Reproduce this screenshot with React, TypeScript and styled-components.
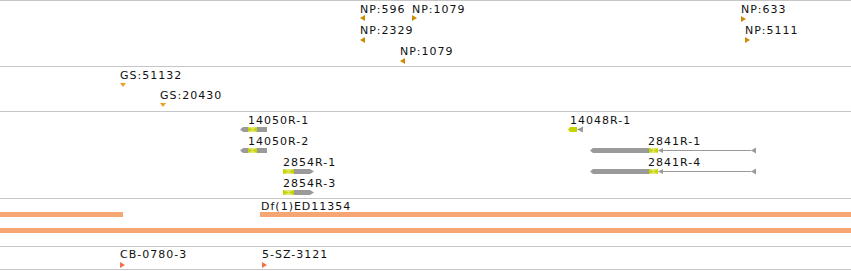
import React from "react";
import styled, { createGlobalStyle } from "styled-components";

const GlobalStyle = createGlobalStyle`
  html, body { margin: 0; padding: 0; background: #ffffff; }
  body { font-family: "DejaVu Sans", Verdana, sans-serif; }
`;

const Browser = styled.div`
  width: 851px;
  display: flex;
  flex-direction: column;
  border-bottom: 1px solid #c6c6c6;
`;

const Track = styled.section<{ $h: number }>`
  position: relative;
  height: ${(p) => p.$h}px;
  border-top: 1px solid #c6c6c6;
  overflow: hidden;
`;

const Label = styled.span.attrs<{ $x: number; $y: number }>((p) => ({
  style: { left: p.$x, top: p.$y },
}))<{ $x: number; $y: number }>`
  position: absolute;
  font-family: "DejaVu Sans", Verdana, sans-serif;
  font-size: 11px;
  line-height: 13px;
  letter-spacing: 1px;
  color: #111111;
  white-space: nowrap;
`;

const Glyph = styled.svg.attrs<{ $x: number; $y: number }>((p) => ({
  style: { left: p.$x, top: p.$y },
}))<{ $x: number; $y: number }>`
  position: absolute;
  display: block;
  overflow: visible;
`;

const Span = styled.div.attrs<{ $x: number; $y: number; $w: number }>((p) => ({
  style: { left: p.$x, top: p.$y, width: p.$w },
}))<{ $x: number; $y: number; $w: number }>`
  position: absolute;
  height: 5px;
  background: #f5a672;
`;

type Dir = "left" | "right" | "down";

const Marker: React.FC<{ x: number; y: number; dir: Dir; color: string }> = ({ x, y, dir, color }) => {
  if (dir === "down") {
    return (
      <Glyph $x={x} $y={y} width={6} height={4} viewBox="0 0 6 4">
        <polygon points="0,0 6,0 3,4" fill={color} />
      </Glyph>
    );
  }
  const pts = dir === "left" ? "5,0 5,6 0,3" : "0,0 0,6 5,3";
  return (
    <Glyph $x={x} $y={y} width={5} height={6} viewBox="0 0 5 6">
      <polygon points={pts} fill={color} />
    </Glyph>
  );
};

const GRAY = "#9a9a9a";
const LIME = "#c6d400";

const Bowtie: React.FC<{ x: number; w: number }> = ({ x, w }) => (
  <>
    <rect x={x} y={1} width={w} height={5} fill={LIME} opacity={0.55} />
    <polygon points={`${x},1 ${x},6 ${x + w / 2},3.5`} fill={LIME} />
    <polygon points={`${x + w},1 ${x + w},6 ${x + w / 2},3.5`} fill={LIME} />
  </>
);

const Gene14050: React.FC<{ y: number }> = ({ y }) => (
  <Glyph $x={240} $y={y} width={27} height={7} viewBox="0 0 27 7">
    <polygon points="0,3.5 3,1 8,1 8,6 3,6" fill={GRAY} />
    <Bowtie x={8} w={9} />
    <rect x={17} y={1} width={10} height={5} fill={GRAY} />
  </Glyph>
);

const Gene14048: React.FC<{ y: number }> = ({ y }) => (
  <Glyph $x={568} $y={y} width={15} height={7} viewBox="0 0 15 7">
    <polygon points="0,3.5 2,1 9,1 9,6 2,6" fill={LIME} />
    <polygon points="9,3.5 15,0.5 15,6.5" fill={GRAY} />
  </Glyph>
);

const Gene2854: React.FC<{ y: number }> = ({ y }) => (
  <Glyph $x={283} $y={y} width={31} height={7} viewBox="0 0 31 7">
    <Bowtie x={0} w={11} />
    <polygon points="11,1 27,1 31,3.5 27,6 11,6" fill={GRAY} />
  </Glyph>
);

const Gene2841: React.FC<{ y: number }> = ({ y }) => (
  <Glyph $x={590} $y={y} width={166} height={7} viewBox="0 0 166 7">
    <polygon points="0,3.5 3,1 59,1 59,6 3,6" fill={GRAY} />
    <Bowtie x={59} w={9} />
    <polygon points="68,3.5 73,1 73,6" fill={GRAY} />
    <rect x={73} y={3} width={88} height={1} fill={GRAY} />
    <polygon points="161,3.5 166,0.5 166,6.5" fill={GRAY} />
  </Glyph>
);

const NP = "#cc8a00";
const GS = "#f0a020";
const CB = "#f5704a";

const npLabels = [
  { t: "NP:596", x: 360, y: 2 },
  { t: "NP:1079", x: 412, y: 2 },
  { t: "NP:2329", x: 360, y: 23 },
  { t: "NP:1079", x: 400, y: 44 },
  { t: "NP:633", x: 741, y: 2 },
  { t: "NP:5111", x: 745, y: 23 },
];
const npMarkers: { x: number; y: number; dir: Dir }[] = [
  { x: 360, y: 14, dir: "left" },
  { x: 412, y: 14, dir: "right" },
  { x: 360, y: 36, dir: "left" },
  { x: 400, y: 57, dir: "left" },
  { x: 741, y: 15, dir: "right" },
  { x: 745, y: 36, dir: "right" },
];

const geneLabels = [
  { t: "14050R-1", x: 248, y: 2 },
  { t: "14050R-2", x: 248, y: 23 },
  { t: "2854R-1", x: 283, y: 44 },
  { t: "2854R-3", x: 283, y: 65 },
  { t: "14048R-1", x: 570, y: 2 },
  { t: "2841R-1", x: 648, y: 23 },
  { t: "2841R-4", x: 648, y: 44 },
];

export default function App() {
  return (
    <>
      <GlobalStyle />
      <Browser>
        <Track $h={65}>
          {npLabels.map((l, i) => (
            <Label key={i} $x={l.x} $y={l.y}>{l.t}</Label>
          ))}
          {npMarkers.map((m, i) => (
            <Marker key={i} x={m.x} y={m.y} dir={m.dir} color={NP} />
          ))}
        </Track>
        <Track $h={44}>
          <Label $x={120} $y={2}>GS:51132</Label>
          <Marker x={120} y={16} dir="down" color={GS} />
          <Label $x={160} $y={22}>GS:20430</Label>
          <Marker x={160} y={36} dir="down" color={GS} />
        </Track>
        <Track $h={86}>
          {geneLabels.map((l, i) => (
            <Label key={i} $x={l.x} $y={l.y}>{l.t}</Label>
          ))}
          <Gene14050 y={14} />
          <Gene14050 y={35} />
          <Gene2854 y={56} />
          <Gene2854 y={77} />
          <Gene14048 y={14} />
          <Gene2841 y={35} />
          <Gene2841 y={56} />
        </Track>
        <Track $h={47}>
          <Label $x={261} $y={1}>Df(1)ED11354</Label>
          <Span $x={0} $y={13} $w={123} />
          <Span $x={260} $y={13} $w={591} />
          <Span $x={0} $y={29} $w={851} />
        </Track>
        <Track $h={22}>
          <Label $x={120} $y={1}>CB-0780-3</Label>
          <Marker x={120} y={15} dir="right" color={CB} />
          <Label $x={262} $y={1}>5-SZ-3121</Label>
          <Marker x={262} y={15} dir="right" color={CB} />
        </Track>
      </Browser>
    </>
  );
}
